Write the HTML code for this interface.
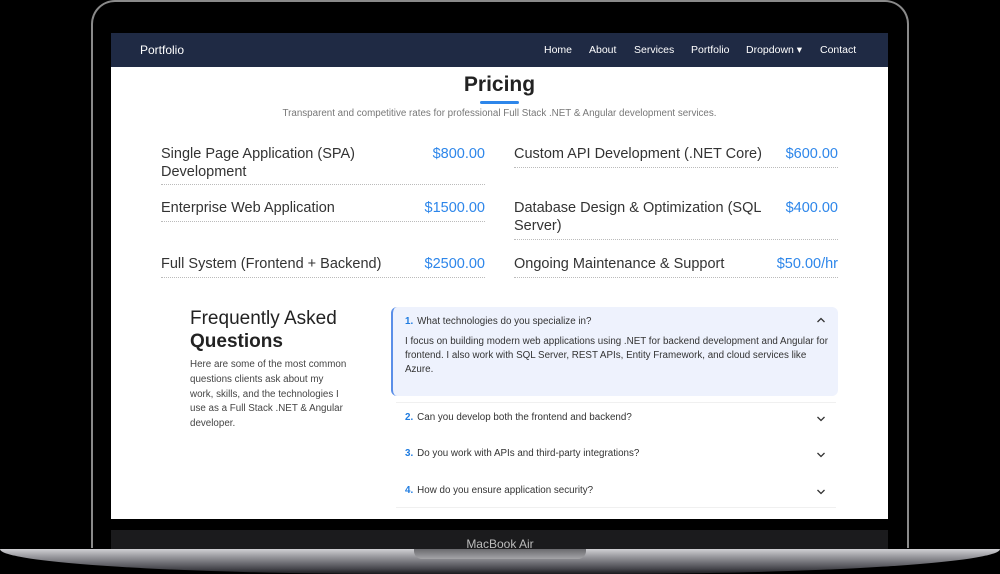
<!DOCTYPE html>
<html><head><meta charset="utf-8"><style>
*{margin:0;padding:0;box-sizing:border-box}
body{width:1000px;height:574px;background:#000;position:relative;overflow:hidden;font-family:"Liberation Sans",Arial,sans-serif}
.abs{position:absolute}
.lid{left:91px;top:0;width:818px;height:548px;border-radius:24px 24px 0 0;border:2px solid #8a8a8a;border-bottom:none;background:#000}
.screen{left:111px;top:33px;width:777px;height:486px;background:#fff;overflow:hidden}
.nav{left:0;top:0;width:777px;height:34px;background:#1f2a44;color:#fff;font-size:10.5px}
.nav span{position:absolute;top:11px}
.row{position:absolute;font-size:14.5px;color:#333;border-bottom:1px dotted #bbb;line-height:18px}
.row .p{position:absolute;right:0;top:0;color:#2d86ea}
.faqi{position:absolute;left:281px;width:446px;font-size:9.8px;color:#333}
.faqi b{color:#1e7be0;font-weight:bold;margin-right:4px}
.chev{position:absolute;right:12px;top:0}
</style></head><body>
<div class="abs lid"></div>
<div class="abs" style="left:111px;top:530px;width:777px;height:19px;background:#1b1b1d"></div>
<div class="abs" style="left:0;top:537px;width:1000px;text-align:center;font-size:12px;color:#bdbdbd">MacBook Air</div>
<div class="abs" style="left:0;top:549px;width:1000px;height:25px;background:linear-gradient(#d0d0d3,#9a9a9f 30%,#45454b 80%,#1a1a1e);border-radius:0 0 40% 40%/0 0 100% 100%"></div>
<div class="abs" style="left:414px;top:549px;width:172px;height:10px;background:linear-gradient(#6a6a6e,#a5a5a8);border-radius:0 0 8px 8px"></div>
<div class="abs screen">
 <div class="abs nav">
  <span style="left:29px;font-size:12px;top:10px">Portfolio</span>
  <span style="left:433px">Home</span>
  <span style="left:478px">About</span>
  <span style="left:523px">Services</span>
  <span style="left:580px">Portfolio</span>
  <span style="left:635px">Dropdown ▾</span>
  <span style="left:709px">Contact</span>
 </div>
 <div class="abs" style="left:0;top:40px;width:777px;text-align:center;font-size:21px;font-weight:bold;color:#222">Pricing</div>
 <div class="abs" style="left:369px;top:68px;width:39px;height:3px;background:#2d86ea;border-radius:2px"></div>
 <div class="abs" style="left:0;top:75px;width:777px;text-align:center;font-size:9.8px;color:#777">Transparent and competitive rates for professional Full Stack .NET &amp; Angular development services.</div>

 <div class="row" style="left:50px;top:112px;width:324px;height:40px">Single Page Application (SPA)<br>Development<span class="p">$800.00</span></div>
 <div class="row" style="left:50px;top:166px;width:324px;height:23px">Enterprise Web Application<span class="p">$1500.00</span></div>
 <div class="row" style="left:50px;top:222px;width:324px;height:23px">Full System (Frontend + Backend)<span class="p">$2500.00</span></div>
 <div class="row" style="left:403px;top:112px;width:324px;height:23px">Custom API Development (.NET Core)<span class="p">$600.00</span></div>
 <div class="row" style="left:403px;top:166px;width:324px;height:41px">Database Design &amp; Optimization (SQL<br>Server)<span class="p">$400.00</span></div>
 <div class="row" style="left:403px;top:222px;width:324px;height:23px">Ongoing Maintenance &amp; Support<span class="p">$50.00/hr</span></div>

 <div class="abs" style="left:79px;top:274px;font-size:19px;color:#222;line-height:23px">Frequently Asked<br><b>Questions</b></div>
 <div class="abs" style="left:79px;top:325px;font-size:9.8px;color:#444;line-height:14.8px;white-space:nowrap">Here are some of the most common<br>questions clients ask about my<br>work, skills, and the technologies I<br>use as a Full Stack .NET &amp; Angular<br>developer.</div>

 <div class="abs" style="left:280px;top:274px;width:447px;height:89px;background:#eef2fd;border-left:2px solid #5a8ee8;border-radius:6px"></div>
 <div class="faqi" style="top:283px;padding-left:13px"><b>1.</b>What technologies do you specialize in?<svg class="chev" width="10" height="8" viewBox="0 0 10 8"><path d="M1.5 6 5 2.5 8.5 6" fill="none" stroke="#333" stroke-width="1.3"/></svg></div>
 <div class="faqi" style="top:302px;padding-left:13px;line-height:14px;color:#333;white-space:nowrap">I focus on building modern web applications using .NET for backend development and Angular for<br>frontend. I also work with SQL Server, REST APIs, Entity Framework, and cloud services like<br>Azure.</div>
 <div class="abs" style="left:285px;top:369px;width:440px;height:1px;background:#f0f0f0"></div>
 <div class="faqi" style="top:379px;padding-left:13px"><b>2.</b>Can you develop both the frontend and backend?<svg class="chev" style="top:3px" width="10" height="8" viewBox="0 0 10 8"><path d="M1.5 2 5 5.5 8.5 2" fill="none" stroke="#333" stroke-width="1.3"/></svg></div>
 <div class="faqi" style="top:415px;padding-left:13px"><b>3.</b>Do you work with APIs and third-party integrations?<svg class="chev" style="top:3px" width="10" height="8" viewBox="0 0 10 8"><path d="M1.5 2 5 5.5 8.5 2" fill="none" stroke="#333" stroke-width="1.3"/></svg></div>
 <div class="faqi" style="top:452px;padding-left:13px"><b>4.</b>How do you ensure application security?<svg class="chev" style="top:3px" width="10" height="8" viewBox="0 0 10 8"><path d="M1.5 2 5 5.5 8.5 2" fill="none" stroke="#333" stroke-width="1.3"/></svg></div>
 <div class="abs" style="left:285px;top:474px;width:440px;height:1px;background:#f0f0f0"></div>
</div>
</body></html>
